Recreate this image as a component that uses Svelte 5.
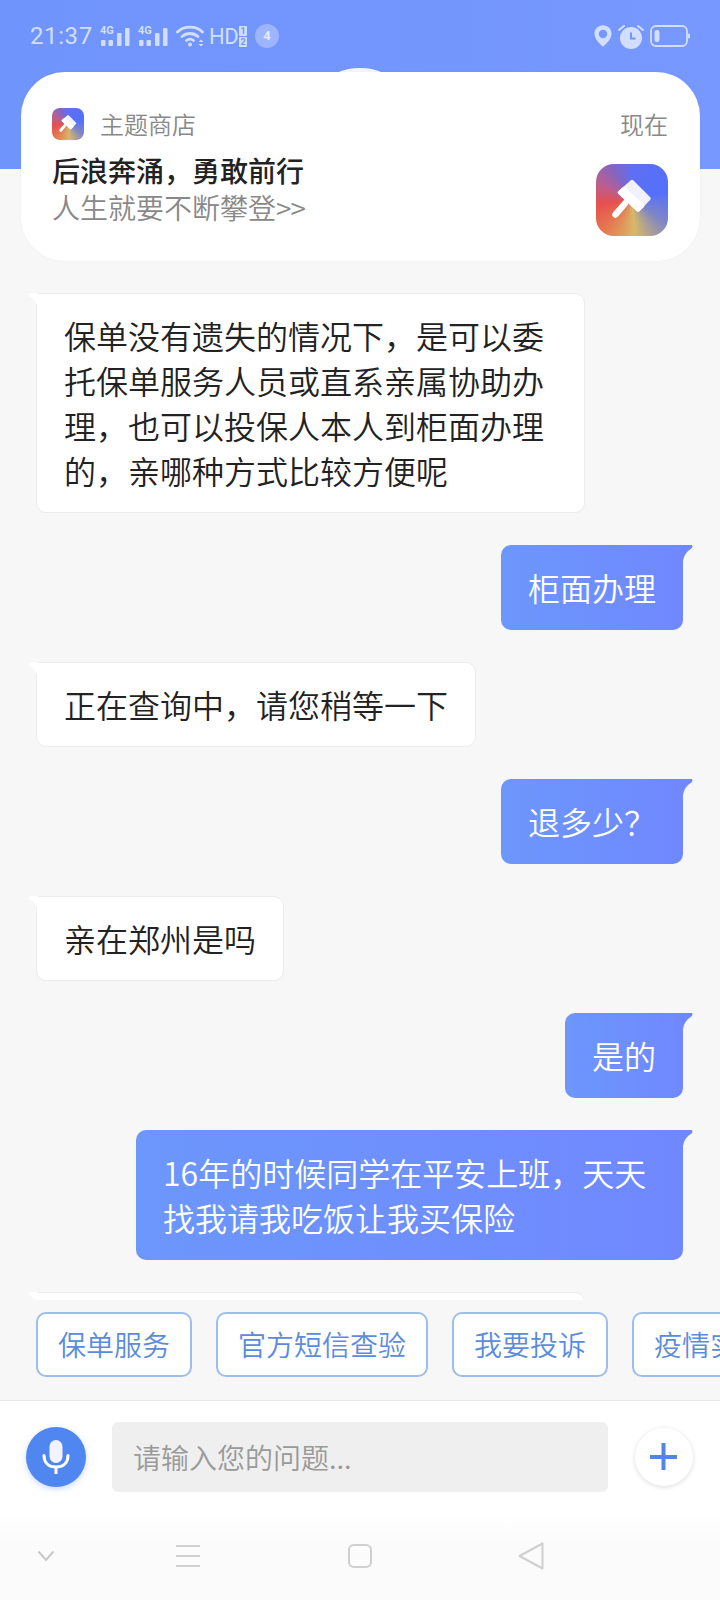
<script lang="ts">
  const messages = [
    { from: 'them', text: '保单没有遗失的情况下，是可以委托保单服务人员或直系亲属协助办理，也可以投保人本人到柜面办理的，亲哪种方式比较方便呢' },
    { from: 'me', text: '柜面办理' },
    { from: 'them', text: '正在查询中，请您稍等一下' },
    { from: 'me', text: '退多少？' },
    { from: 'them', text: '亲在郑州是吗' },
    { from: 'me', text: '是的' },
    { from: 'me', text: '16年的时候同学在平安上班，天天找我请我吃饭让我买保险' },
    // next reply is scrolled almost out of view
    { from: 'them full', text: ' ' }
  ];
  const chips = ['保单服务', '官方短信查验', '我要投诉', '疫情实时查询'];
  const bars = [
    { x: 1, y: 14, h: 6 },
    { x: 8.5, y: 14, h: 6 },
    { x: 17, y: 7, h: 13 },
    { x: 25, y: 2, h: 18 }
  ];
</script>

{#snippet signal()}
  <span class="signal">
    <span class="g4">4G</span>
    <svg width="30" height="20" viewBox="0 0 30 20">
      {#each bars as b}
        <rect x={b.x} y={b.y} width="4.500" height={b.h} rx="1" fill="currentColor" />
      {/each}
    </svg>
  </span>
{/snippet}

{#snippet brush()}
  <svg class="brush" viewBox="0 0 72 72">
    <path d="M29 39.500 L19.500 50.500" stroke="#fff" stroke-width="6.500" stroke-linecap="round" />
    <path d="M36 17.500 L53 34.500 L42 46 L23.500 28.500 Z" fill="#f1f1fb" stroke="#f1f1fb" stroke-width="3.500" stroke-linejoin="round" />
    <path d="M23.500 28.500 L28 24.500 L46.500 42 L42 46 Z" fill="#fff" stroke="#fff" stroke-width="3.500" stroke-linejoin="round" />
  </svg>
{/snippet}

<div class="screen">
  <header class="top">
    <div class="status">
      <span class="time">21:37</span>
      {@render signal()}
      {@render signal()}
      <svg class="wifi" width="28" height="22" viewBox="0 0 28 22" fill="none" stroke="currentColor" stroke-width="2.800" stroke-linecap="round">
        <path d="M1.500 7 C8 .5 20 .5 26.500 7" />
        <path d="M6 11.500 C10.500 7.500 17.500 7.500 22 11.500" />
        <path d="M10.500 15.500 C12.500 14 15.500 14 17.500 15.500" />
        <circle cx="14" cy="19.500" r="2" fill="currentColor" stroke="none" />
        <path d="M25 14.500 L27.500 17 H22.500 Z M22.500 19 H27.500 L25 21.500 Z" fill="currentColor" stroke="none" />
      </svg>
      <span class="hd">HD</span>
      <span class="sims"><span>1</span><span>2</span></span>
      <span class="badge">4</span>
      <span class="right-icons">
        <svg width="18" height="22" viewBox="0 0 20 24"><path fill-rule="evenodd" d="M10 0 C4.500 0 .5 4.200 .5 9.500 C.5 15.500 7 21.500 10 24 C13 21.500 19.500 15.500 19.500 9.500 C19.500 4.200 15.500 0 10 0 Z M10 5 A4.700 4.700 0 1 1 10 14.400 A4.700 4.700 0 1 1 10 5 Z" fill="currentColor" /></svg>
        <svg width="26" height="25" viewBox="0 0 26 25">
          <circle cx="13" cy="14" r="11" fill="currentColor" />
          <path d="M13 8.500 V14.500 H17.500" fill="none" stroke="#7195fb" stroke-width="2" />
          <path d="M1 6 L6 2 M20 2 L25 6" stroke="currentColor" stroke-width="2" stroke-linecap="round" />
        </svg>
        <svg width="40" height="22" viewBox="0 0 40 22">
          <rect x="1" y="1" width="36" height="20" rx="5" fill="none" stroke="currentColor" stroke-width="1.800" />
          <rect x="4.500" y="5" width="5" height="12" rx="2" fill="currentColor" />
          <rect x="38" y="8.500" width="2" height="5" rx="1" fill="currentColor" />
        </svg>
      </span>
    </div>
    <span class="bump"></span>
  </header>

  <div class="notice">
    <div class="notice-head">
      <span class="app-icon small">{@render brush()}</span>
      <span class="app-name">主题商店</span>
      <span class="when">现在</span>
    </div>
    <div class="notice-body">
      <div>
        <div class="notice-title">后浪奔涌，勇敢前行</div>
        <div class="notice-sub">人生就要不断攀登<span class="more">&gt;&gt;</span></div>
      </div>
      <span class="app-icon large">{@render brush()}</span>
    </div>
  </div>

  <main class="chat">
    {#each messages as m}
      <div class="row {m.from}">
        <div class="bubble">{m.text}</div>
      </div>
    {/each}
  </main>

  <div class="chips">
    {#each chips as c}
      <span class="chip">{c}</span>
    {/each}
  </div>

  <div class="composer">
    <span class="mic">
      <svg width="28" height="36" viewBox="0 0 28 36" fill="none">
        <rect x="7.500" y="1" width="13" height="23" rx="6.500" fill="#f1f4fe" />
        <path d="M2 16.500 C2 24 7 28 14 28 C21 28 26 24 26 16.500" stroke="#fff" stroke-width="3" stroke-linecap="round" />
        <path d="M14 28 V35" stroke="#fff" stroke-width="3" />
      </svg>
    </span>
    <div class="field">请输入您的问题...</div>
    <span class="plus">
      <svg width="28" height="28" viewBox="0 0 28 28"><path d="M0 14 H27 M13.500 0 V27" stroke="#4f86e8" stroke-width="4" /></svg>
    </span>
  </div>

  <nav class="softkeys">
    <svg class="k1" width="18" height="12" viewBox="0 0 18 12" fill="none"><path d="M1.500 1.500 L9 10 L16.500 1.500" stroke="#c8c8c8" stroke-width="2" /></svg>
    <svg class="k2" width="26" height="24" viewBox="0 0 26 24"><path d="M1 2 H25 M1 12 H25 M1 22 H25" stroke="#d0d0d0" stroke-width="2" /></svg>
    <svg class="k3" width="24" height="24" viewBox="0 0 24 24"><rect x="1" y="1" width="22" height="22" rx="5" fill="none" stroke="#cfcfcf" stroke-width="2" /></svg>
    <svg class="k4" width="26" height="28" viewBox="0 0 26 28"><path d="M24.500 1.500 V26.500 L1.500 14 Z" fill="none" stroke="#cfcfcf" stroke-width="2" stroke-linejoin="round" /></svg>
  </nav>
</div>

<style>
  :global(body) {
    margin: 0;
    background: #f7f7f7;
  }

  .screen {
    position: relative;
    width: 720px;
    height: 1600px;
    overflow: hidden;
    display: flex;
    flex-direction: column;
    background: #f7f7f7;
    font-family: "Noto Sans CJK SC", "Noto Sans", sans-serif;
  }

  /* Header */
  .top {
    position: relative;
    flex: none;
    height: 169px;
    background: linear-gradient(90deg, #6f94fb, #7698ff);
    overflow: hidden;
  }

  .bump {
    position: absolute;
    left: 301px;
    top: 68px;
    width: 118px;
    height: 118px;
    border-radius: 50%;
    background: #f3f6ff;
  }

  .status {
    display: flex;
    align-items: center;
    height: 72px;
    padding: 0 30px;
    color: #d2deff;
    font-family: Roboto, sans-serif;
  }

  .time {
    width: 70px;
    font-size: 24px;
    letter-spacing: 0.6px;
  }

  .signal {
    position: relative;
    display: flex;
    width: 30px;
    height: 20px;
    margin-right: 8px;
  }

  .g4 {
    position: absolute;
    left: 0;
    top: -1px;
    font-size: 11px;
    font-weight: 700;
    line-height: 12px;
  }

  .hd {
    width: 29px;
    margin-left: 5px;
    font-size: 22px;
    letter-spacing: -0.5px;
  }

  .sims {
    display: flex;
    flex-direction: column;
    gap: 1px;
    margin-left: 1px;
  }

  .sims span {
    width: 8px;
    height: 10px;
    border-radius: 1px;
    background: #d2deff;
    color: #7195fb;
    font-size: 9px;
    line-height: 10px;
    font-weight: 700;
    text-align: center;
  }

  .badge {
    width: 24px;
    height: 24px;
    margin-left: 8px;
    border-radius: 50%;
    background: rgba(255, 255, 255, 0.3);
    color: #e6edff;
    font-size: 13px;
    font-weight: 700;
    line-height: 24px;
    text-align: center;
  }

  .right-icons {
    display: flex;
    align-items: center;
    gap: 6px;
    margin-left: auto;
  }

  /* Notification */
  .notice {
    position: absolute;
    left: 21px;
    top: 72px;
    box-sizing: border-box;
    width: 679px;
    height: 189px;
    padding: 36px 32px 0 31px;
    border-radius: 44px;
    background: #fff;
    box-shadow: 0 0 3px rgba(0, 0, 0, 0.04);
  }

  .notice-head {
    display: flex;
    align-items: center;
    height: 32px;
    font-size: 24px;
    font-weight: 350;
    color: #888;
  }

  .app-name {
    margin: 0 0 2px 16px;
  }

  .when {
    margin: 0 0 2px auto;
  }

  .app-icon {
    display: block;
    flex: none;
    background: conic-gradient(#5f6ef2 0deg, #5470fb 75deg, #7f86c4 125deg, #d8b868 175deg, #e5764f 225deg, #e7504e 262deg, #b75f93 300deg, #8165c4 330deg, #5f6ef2 360deg);
  }

  .app-icon.small {
    width: 32px;
    height: 32px;
    border-radius: 8px;
  }

  .app-icon.large {
    width: 72px;
    height: 72px;
    margin-top: 13px;
    border-radius: 18px;
  }

  .brush {
    display: block;
    width: 100%;
    height: 100%;
  }

  .notice-body {
    display: flex;
    justify-content: space-between;
    margin-top: 11px;
  }

  .notice-title {
    font-size: 28px;
    line-height: 38px;
    font-weight: 500;
    color: #222;
  }

  .notice-sub {
    font-size: 28px;
    font-weight: 350;
    line-height: 37px;
    color: #888;
  }

  .more {
    letter-spacing: -1px;
  }

  /* Messages */
  .chat {
    flex: 1;
    min-height: 0;
    overflow: hidden;
    display: flex;
    flex-direction: column;
    gap: 32px;
    padding: 124px 36px 0;
  }

  .row {
    display: flex;
    flex: none;
  }

  .row.me {
    justify-content: flex-end;
  }

  .bubble {
    position: relative;
    box-sizing: border-box;
    max-width: 549px;
    padding: 20px 27px;
    border-radius: 10px;
    font-size: 32px;
    font-weight: 350;
    line-height: 45px;
  }

  .them .bubble {
    padding-top: 19px;
    padding-bottom: 19px;
    border: 1px solid #ececec;
    border-top-left-radius: 0;
    background: #fff;
    color: #222;
  }

  .full .bubble {
    width: 549px;
  }

  .them .bubble::before {
    content: '';
    position: absolute;
    left: -9px;
    top: -1px;
    width: 10px;
    height: 16px;
    background: #fff;
    clip-path: path('M10 0 H1 Q0 1 1 3 Q9 8 10 16 Z');
  }

  .me .bubble {
    margin-right: 1px;
    max-width: 547px;
    background: linear-gradient(90deg, #6c97fb, #7088ff);
    border-top-right-radius: 0;
    color: #fff;
  }

  .me .bubble::after {
    content: '';
    position: absolute;
    right: -10px;
    top: 0;
    width: 10px;
    height: 16px;
    background: #7088ff;
    clip-path: path('M0 0 H9 Q10 1 9 3 Q1 8 0 16 Z');
  }

  /* Quick replies */
  .chips {
    flex: none;
    display: flex;
    gap: 24px;
    height: 101px;
    padding: 12px 0 0 36px;
    box-sizing: border-box;
    overflow: hidden;
    background: #f7f7f7;
    border-bottom: 1px solid #e9e9e9;
  }

  .chip {
    flex: none;
    box-sizing: border-box;
    height: 65px;
    padding: 0 20px;
    border: 2px solid #9dbcef;
    border-radius: 10px;
    background: #fff;
    color: #5b8bdc;
    font-size: 28px;
    font-weight: 350;
    line-height: 61px;
  }

  /* Composer */
  .composer {
    flex: none;
    display: flex;
    align-items: center;
    height: 110px;
    padding: 2px 26px 0;
    background: #fff;
    box-sizing: border-box;
  }

  .mic {
    flex: none;
    display: flex;
    align-items: center;
    justify-content: center;
    width: 60px;
    height: 60px;
    border-radius: 50%;
    background: #4f86f0;
    box-shadow: 0 2px 6px rgba(79, 134, 240, 0.3);
  }

  .field {
    flex: none;
    box-sizing: border-box;
    width: 496px;
    height: 70px;
    margin-left: 26px;
    padding-left: 21px;
    border-radius: 6px;
    background: #efefef;
    color: #999;
    font-size: 28px;
    font-weight: 350;
    line-height: 70px;
  }

  .plus {
    flex: none;
    display: flex;
    align-items: center;
    justify-content: center;
    width: 58px;
    height: 58px;
    margin-left: 27px;
    border-radius: 50%;
    background: #fff;
    box-shadow: 0 1px 5px rgba(0, 0, 0, 0.14);
  }

  /* Android keys */
  .softkeys {
    position: relative;
    flex: none;
    height: 89px;
    background: linear-gradient(#fff, #fbfbfb 40%);
  }

  .softkeys svg {
    position: absolute;
    top: 50%;
    transform: translate(-50%, -50%);
  }

  .k1 { left: 46px; }
  .k2 { left: 188px; }
  .k3 { left: 360px; }
  .k4 { left: 531px; }
</style>
